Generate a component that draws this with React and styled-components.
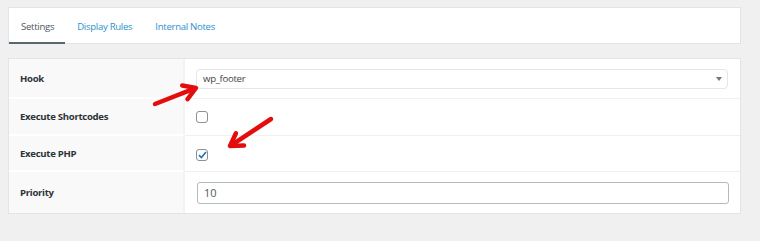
import React from "react";
import styled, { createGlobalStyle } from "styled-components";

const Global = createGlobalStyle`
  body {
    margin: 0;
    background: #f0f0f1;
    font-family: "Open Sans", "Noto Sans", sans-serif;
    color: #1d2327;
  }
`;

const Page = styled.div`
  padding: 7px 19px 0 8px;
  display: flex;
  flex-direction: column;
  gap: 14px;
`;

const TabBar = styled.nav`
  display: flex;
  background: #fff;
  border: 1px solid #e2e4e7;
  height: 35px;
`;

const Tab = styled.a`
  display: flex;
  align-items: center;
  padding: 3px 11px 0 12px;
  font-size: 9.6px;
  letter-spacing: -0.3px;
  color: ${(p) => (p.$active ? "#50575e" : "#2e8fd0")};
  border-bottom: 2px solid ${(p) => (p.$active ? "#5b6770" : "transparent")};
  margin-bottom: -1px;
  cursor: pointer;
  white-space: nowrap;
`;

const Panel = styled.div`
  position: relative;
  background: #fff;
  border: 1px solid #e2e4e7;
  display: grid;
  grid-template-columns: 176px 1fr;
`;

const Label = styled.div`
  background: #f9f9f9;
  border-right: 2px solid #f3f3f3;
  border-bottom: ${(p) => (p.$last ? 0 : "2px solid #fff")};
  height: ${(p) => p.$h}px;
  box-sizing: border-box;
  display: flex;
  align-items: center;
  padding-left: 11px;
  font-size: 9.6px;
  letter-spacing: -0.3px;
  font-weight: 700;
  color: #2c3338;
`;

const Value = styled.div`
  border-bottom: ${(p) => (p.$last ? 0 : "1px solid #f0f0f1")};
  height: ${(p) => p.$h}px;
  box-sizing: border-box;
  display: flex;
  align-items: center;
  padding: 0 11px 0 11px;
`;

const Select = styled.div`
  flex: 1;
  height: 20px;
  box-sizing: border-box;
  border: 1px solid #e6e6e6;
  border-radius: 4px;
  display: flex;
  align-items: center;
  justify-content: space-between;
  padding: 0 5px 0 6px;
  font-size: 9.6px;
  letter-spacing: -0.3px;
  color: #3c434a;
  margin-right: 1px;
`;

const Caret = styled.span`
  width: 0;
  height: 0;
  border-left: 3px solid transparent;
  border-right: 3px solid transparent;
  border-top: 4px solid #777;
`;

const Box = styled.span`
  width: 12px;
  height: 12px;
  box-sizing: border-box;
  border: 1px solid #8c8f94;
  border-radius: 3px;
  display: flex;
  align-items: center;
  justify-content: center;
  margin-top: ${(p) => p.$mt || 0}px;
`;

const Input = styled.div`
  flex: 1;
  height: 22px;
  box-sizing: border-box;
  border: 1px solid #b4b9be;
  border-radius: 3px;
  display: flex;
  align-items: center;
  padding-left: 6px;
  font-size: 11px;
  color: #50575e;
  margin-left: 1px;
`;

const Arrows = styled.svg`
  position: absolute;
  left: -9px;
  top: -59px;
  width: 760px;
  height: 241px;
  pointer-events: none;
`;

function Arrow({ x1, y1, x2, y2 }) {
  const ang = Math.atan2(y2 - y1, x2 - x1);
  const len = 14;
  const spread = 0.55;
  const ax = x2 - len * Math.cos(ang - spread);
  const ay = y2 - len * Math.sin(ang - spread);
  const bx = x2 - len * Math.cos(ang + spread);
  const by = y2 - len * Math.sin(ang + spread);
  return (
    <g stroke="#e30d0d" strokeLinecap="round" strokeLinejoin="round" fill="none">
      <line x1={x1} y1={y1} x2={x2 - 4 * Math.cos(ang)} y2={y2 - 4 * Math.sin(ang)} strokeWidth="4.5" />
      <polyline points={`${ax},${ay} ${x2},${y2} ${bx},${by}`} strokeWidth="4.5" />
    </g>
  );
}

export default function App() {
  return (
    <>
      <Global />
      <Page>
        <TabBar>
          <Tab $active>Settings</Tab>
          <Tab>Display Rules</Tab>
          <Tab>Internal Notes</Tab>
        </TabBar>
        <Panel>
          <Label $h={40}>Hook</Label>
          <Value $h={40}>
            <Select>
              wp_footer
              <Caret />
            </Select>
          </Value>
          <Label $h={37}>Execute Shortcodes</Label>
          <Value $h={37}>
            <Box />
          </Value>
          <Label $h={36}>Execute PHP</Label>
          <Value $h={36}>
            <Box $mt={2}>
              <svg width="9" height="8" viewBox="0 0 9 8">
                <path d="M1 4.2 L3.4 6.5 L8 1" stroke="#2271b1" strokeWidth="1.6" fill="none" />
              </svg>
            </Box>
          </Value>
          <Label $h={41} $last>Priority</Label>
          <Value $h={41} $last>
            <Input>10</Input>
          </Value>
          <Arrows viewBox="0 0 760 241">
            <Arrow x1={155} y1={104} x2={196} y2={88} />
            <Arrow x1={271} y1={119} x2={230} y2={146} />
          </Arrows>
        </Panel>
      </Page>
    </>
  );
}
